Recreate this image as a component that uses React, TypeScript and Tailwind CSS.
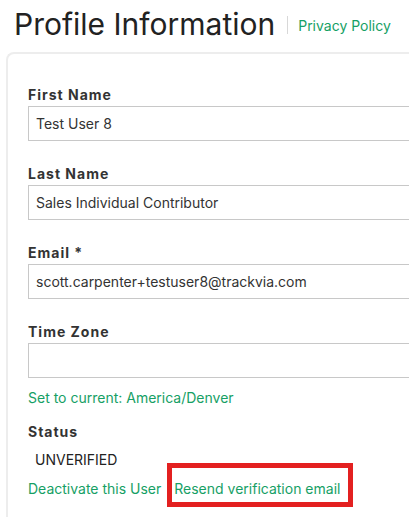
import React from "react";

function Field({ label, value }: { label: string; value: string }) {
  return (
    <div className="mb-[23px]">
      <div className="text-[14px] leading-[20px] font-bold tracking-[1px] text-[#333] mb-px">{label}</div>
      <div className="h-[35px] border border-[#c8c8c8] flex items-center px-[7px] text-[14px] text-[#333] w-[400px]">
        {value}
      </div>
    </div>
  );
}

export default function App() {
  return (
    <div
      className="w-[409px] h-[517px] overflow-hidden bg-white relative"
      style={{ fontFamily: "Inter, 'Noto Sans', sans-serif" }}
    >
      <div className="flex items-center pl-[14px] pt-px h-[46px] whitespace-nowrap">
        <h1 className="shrink-0 text-[30px] leading-[40px] font-normal text-[#222]">Profile Information</h1>
        <div className="shrink-0 w-px h-[18px] bg-[#d8d8d8] ml-[12px] mr-[10px] mt-[3px]" />
        <a className="shrink-0 text-[14px] text-[#16a065] mt-[3px]">Privacy Policy</a>
      </div>
      <div className="ml-[6px] mt-[6px] border-2 border-[#ededed] rounded-tl-[8px] border-r-0 border-b-0 pl-[20px] pt-[31px] h-[500px]">
        <Field label="First Name" value="Test User 8" />
        <Field label="Last Name" value="Sales Individual Contributor" />
        <Field label="Email *" value="scott.carpenter+testuser8@trackvia.com" />
        <div>
          <div className="text-[14px] leading-[20px] font-bold tracking-[1px] text-[#333] mb-px">Time Zone</div>
          <div className="h-[35px] border border-[#c8c8c8] w-[400px]" />
        </div>
        <div className="mt-[10px] text-[14px] leading-[20px] text-[#16a065]">Set to current: America/Denver</div>
        <div className="mt-[14px] text-[14px] leading-[20px] font-bold tracking-[1px] text-[#333]">Status</div>
        <div className="mt-[8px] pl-[7px] text-[14px] leading-[20px] text-[#222]">UNVERIFIED</div>
        <div className="mt-[9px] flex text-[14px] leading-[20px] text-[#16a065] gap-[13px]">
          <span>Deactivate this User</span>
          <span>Resend verification email</span>
        </div>
      </div>
      <div className="absolute left-[167px] top-[463px] w-[186px] h-[44px] border-[5px] border-[#e32020]" />
    </div>
  );
}
